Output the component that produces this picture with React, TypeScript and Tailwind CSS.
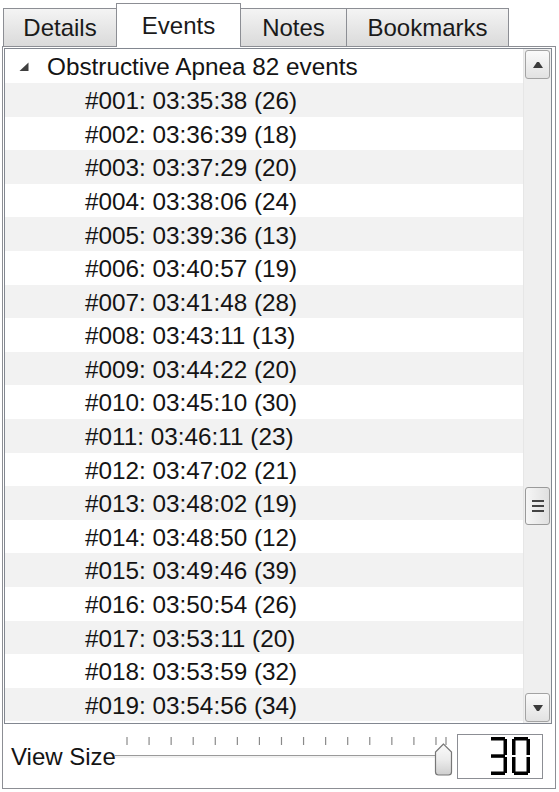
const events = [
  ['03:35:38', 26],
  ['03:36:39', 18],
  ['03:37:29', 20],
  ['03:38:06', 24],
  ['03:39:36', 13],
  ['03:40:57', 19],
  ['03:41:48', 28],
  ['03:43:11', 13],
  ['03:44:22', 20],
  ['03:45:10', 30],
  ['03:46:11', 23],
  ['03:47:02', 21],
  ['03:48:02', 19],
  ['03:48:50', 12],
  ['03:49:46', 39],
  ['03:50:54', 26],
  ['03:53:11', 20],
  ['03:53:59', 32],
  ['03:54:56', 34],
] as const;

const SEGMENTS: Record<string, string> = {
  '0': 'abcdef',
  '3': 'abcdg',
};

const SevenSegDigit = ({ digit }: { digit: string }) => {
  const on = SEGMENTS[digit] ?? '';
  const seg = {
    a: { x: 2, y: 0, w: 14, h: 3.5 },
    b: { x: 14.5, y: 2, w: 3.5, h: 16 },
    c: { x: 14.5, y: 20, w: 3.5, h: 16 },
    d: { x: 2, y: 34.5, w: 14, h: 3.5 },
    e: { x: 0, y: 20, w: 3.5, h: 16 },
    f: { x: 0, y: 2, w: 3.5, h: 16 },
    g: { x: 2, y: 17.3, w: 14, h: 3.5 },
  };
  return (
    <svg width="18" height="38" viewBox="0 0 18 38">
      {Object.entries(seg).map(([k, s]) =>
        on.includes(k) ? <rect key={k} x={s.x} y={s.y} width={s.w} height={s.h} fill="#000" /> : null
      )}
    </svg>
  );
};

const Tab = ({ label, active, className }: { label: string; active?: boolean; className: string }) => (
  <div
    className={`flex items-center justify-center border border-b-0 border-[#8c8e94] text-[24px] text-[#1a1a1a] ${
      active ? 'bg-white relative z-10 -mb-[1px]' : 'bg-gradient-to-b from-[#f4f4f4] to-[#dadada]'
    } ${className}`}
  >
    {label}
  </div>
);

const ScrollButton = ({ up }: { up?: boolean }) => (
  <div className="mx-[1px] h-[29px] rounded-[3px] border border-[#a3a3a3] bg-gradient-to-b from-[#fafafa] to-[#e2e2e2] flex items-center justify-center">
    <svg width="12" height="8" viewBox="0 0 12 8">
      {up ? <polygon points="1,7 11,7 7,1 5,1" fill="#3c3c3c" /> : <polygon points="1,1 11,1 7,7 5,7" fill="#3c3c3c" />}
    </svg>
  </div>
);

const Slider = () => {
  const ticks = Array.from({ length: 15 }, (_, i) => 12 + i * 22.07);
  ticks.push(331);
  return (
    <svg width="338" height="46" viewBox="0 0 338 46" className="block">
      {ticks.map((x, i) => (
        <line key={i} x1={x} y1="4" x2={x} y2="12" stroke="#8a8a8a" strokeWidth="1.2" />
      ))}
      <line x1="0" y1="22.5" x2="330" y2="22.5" stroke="#9a9a9a" strokeWidth="1.2" />
      <line x1="0" y1="24" x2="330" y2="24" stroke="#e4e4e4" strokeWidth="1.2" />
      <defs>
        <linearGradient id="thumb" x1="0" y1="0" x2="0" y2="1">
          <stop offset="0" stopColor="#fbfbfb" />
          <stop offset="0.5" stopColor="#ececec" />
          <stop offset="1" stopColor="#cfcfcf" />
        </linearGradient>
      </defs>
      <path d="M328.5 11 L320.5 19 L320.5 39 Q320.5 42 323.5 42 L333.5 42 Q336.5 42 336.5 39 L336.5 19 Z" fill="url(#thumb)" stroke="#777" strokeWidth="1.2" />
    </svg>
  );
};

export default function App() {
  return (
    <div className="w-[559px] h-[792px] bg-white text-[#141414] overflow-hidden" style={{ fontFamily: '"Liberation Sans", Arial, sans-serif' }}>
      <div className="flex items-end h-[46px] pl-[3px]">
        <Tab label="Details" className="w-[114px] h-[38px]" />
        <Tab label="Events" active className="w-[125px] h-[44px] -ml-[1px]" />
        <Tab label="Notes" className="w-[107px] h-[38px] -ml-[1px]" />
        <Tab label="Bookmarks" className="w-[163px] h-[38px] -ml-[1px]" />
      </div>
      <div className="ml-[2px] w-[554px] h-[743px] border border-[#8c8e94] bg-white flex flex-col">
        <div className="mt-[1px] ml-[1px] w-[548px] h-[676px] border border-[#828790] flex overflow-hidden">
          <div className="flex-1 flex flex-col text-[24.3px] leading-none">
            <div className="h-[34px] shrink-0 flex items-center">
              <svg width="10" height="10" viewBox="0 0 10 10" className="ml-[14px] mt-[2px]">
                <polygon points="9.5,0.5 9.5,9 0.5,9" fill="#3f3f3f" />
              </svg>
              <span className="ml-[18px] pt-[3px]">Obstructive Apnea 82 events</span>
            </div>
            {events.map(([time, dur], i) => (
              <div key={i} className={`h-[33.6px] shrink-0 flex items-center pt-[3px] pl-[80px] ${i % 2 === 0 ? 'bg-[#f2f2f2]' : 'bg-white'}`}>
                #{String(i + 1).padStart(3, '0')}: {time} ({dur})
              </div>
            ))}
          </div>
          <div className="w-[28px] shrink-0 bg-[#efefef] border-l border-[#e6e6e6] flex flex-col pt-[1px] pb-[1px]">
            <ScrollButton up />
            <div className="h-[408px]" />
            <div className="mx-[1px] h-[38px] rounded-[3px] border border-[#9a9a9a] bg-gradient-to-r from-[#f6f6f6] to-[#e0e0e0] flex flex-col items-center justify-center gap-[3px]">
              <div className="w-[12px] h-[2px] bg-[#444]" />
              <div className="w-[12px] h-[2px] bg-[#444]" />
              <div className="w-[12px] h-[2px] bg-[#444]" />
            </div>
            <div className="flex-1" />
            <ScrollButton />
          </div>
        </div>
        <div className="flex-1 flex items-center pl-[8px]">
          <span className="text-[24px] leading-none mt-[2px]">View Size</span>
          <div className="-ml-[1px]">
            <Slider />
          </div>
          <div className="relative ml-[4px] w-[86px] h-[45px] border border-[#8c8e94] flex items-center justify-end pr-[12px] gap-[5px]">
            <span className="absolute inset-0 flex items-center justify-end pr-[12px] text-[40px] leading-none text-transparent select-none">30</span>
            <SevenSegDigit digit="3" />
            <SevenSegDigit digit="0" />
          </div>
        </div>
      </div>
    </div>
  );
}
